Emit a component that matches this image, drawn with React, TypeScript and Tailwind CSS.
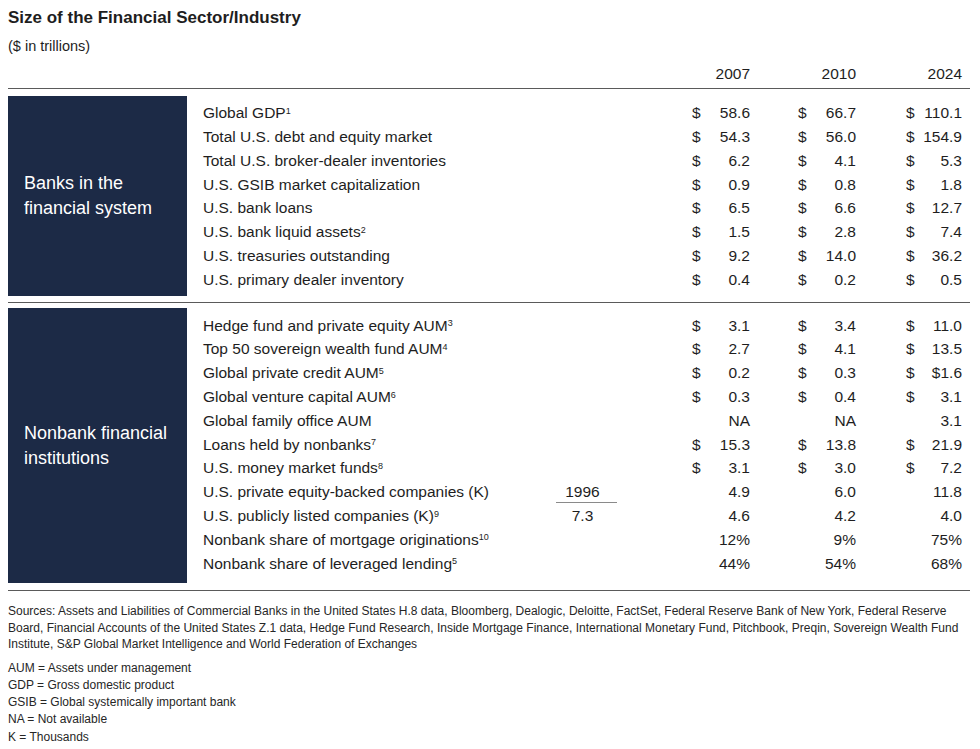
import React from 'react';

type Row = {
  label: string;
  sup?: string;
  extra?: string;
  extraLine?: boolean;
  values: [string, string, string];
  dollar?: boolean;
};

const banks: Row[] = [
  { label: 'Global GDP', sup: '1', values: ['58.6', '66.7', '110.1'], dollar: true },
  { label: 'Total U.S. debt and equity market', values: ['54.3', '56.0', '154.9'], dollar: true },
  { label: 'Total U.S. broker-dealer inventories', values: ['6.2', '4.1', '5.3'], dollar: true },
  { label: 'U.S. GSIB market capitalization', values: ['0.9', '0.8', '1.8'], dollar: true },
  { label: 'U.S. bank loans', values: ['6.5', '6.6', '12.7'], dollar: true },
  { label: 'U.S. bank liquid assets', sup: '2', values: ['1.5', '2.8', '7.4'], dollar: true },
  { label: 'U.S. treasuries outstanding', values: ['9.2', '14.0', '36.2'], dollar: true },
  { label: 'U.S. primary dealer inventory', values: ['0.4', '0.2', '0.5'], dollar: true },
];

const nonbanks: Row[] = [
  { label: 'Hedge fund and private equity AUM', sup: '3', values: ['3.1', '3.4', '11.0'], dollar: true },
  { label: 'Top 50 sovereign wealth fund AUM', sup: '4', values: ['2.7', '4.1', '13.5'], dollar: true },
  { label: 'Global private credit AUM', sup: '5', values: ['0.2', '0.3', '$1.6'], dollar: true },
  { label: 'Global venture capital AUM', sup: '6', values: ['0.3', '0.4', '3.1'], dollar: true },
  { label: 'Global family office AUM', values: ['NA', 'NA', '3.1'] },
  { label: 'Loans held by nonbanks', sup: '7', values: ['15.3', '13.8', '21.9'], dollar: true },
  { label: 'U.S. money market funds', sup: '8', values: ['3.1', '3.0', '7.2'], dollar: true },
  { label: 'U.S. private equity-backed companies (K)', extra: '1996', extraLine: true, values: ['4.9', '6.0', '11.8'] },
  { label: 'U.S. publicly listed companies (K)', sup: '9', extra: '7.3', values: ['4.6', '4.2', '4.0'] },
  { label: 'Nonbank share of mortgage originations', sup: '10', values: ['12%', '9%', '75%'] },
  { label: 'Nonbank share of leveraged lending', sup: '5', values: ['44%', '54%', '68%'] },
];

function Value({ v, dollar, last }: { v: string; dollar?: boolean; last?: boolean }) {
  // the "$ $1.6" cell keeps its own leading dollar sign
  const showDollar = dollar && v !== 'NA';
  return (
    <div className="w-[106px] flex justify-end">
      <div className={`flex justify-between ${last ? 'w-[56px]' : 'w-[58px]'}`}>
        <span>{showDollar ? '$' : ''}</span>
        <span>{v}</span>
      </div>
    </div>
  );
}

function TableRow({ row }: { row: Row }) {
  return (
    <div className="flex items-center h-[23.8px]">
      <div className="flex-1 whitespace-nowrap">
        {row.label}
        {row.sup && <sup className="text-[9px]">{row.sup}</sup>}
      </div>
      <div className="w-[61px] mr-[27px] h-full flex items-center justify-center pr-[8px]">
        {row.extra && (
          <span className={row.extraLine ? '' : ''}>{row.extra}</span>
        )}
      </div>
      {row.values.map((v, i) => (
        <Value key={i} v={v} dollar={row.dollar} last={i === 2} />
      ))}
    </div>
  );
}

function Section({ title, rows, bottomPad }: { title: React.ReactNode; rows: Row[]; bottomPad: string }) {
  return (
    <div className="flex">
      <div className="w-[179px] bg-[#1c2a46] flex items-center pl-[16px] text-white text-[18px] leading-[25px]">
        <div>{title}</div>
      </div>
      <div className={`flex-1 ml-[16px] pt-[5px] ${bottomPad}`}>
        {rows.map((r, i) => (
          <div key={i} className="relative">
            <TableRow row={r} />
            {r.extraLine && (
              <div className="absolute left-[353px] bottom-[1px] w-[61px] h-px bg-[#8a8a8a]" />
            )}
          </div>
        ))}
      </div>
    </div>
  );
}

export default function App() {
  return (
    <div
      className="w-[980px] h-[749px] bg-white text-[#1e1e1e] pl-[8px] pr-[10px]"
      style={{ fontFamily: '"Liberation Sans", Arial, sans-serif' }}
    >
      <h1 className="pt-[7px] text-[17px] leading-[22px] font-bold">Size of the Financial Sector/Industry</h1>
      <p className="mt-[7px] text-[14.5px] leading-[20px]">($ in trillions)</p>

      <div className="text-[15.5px]">
        <div className="flex mt-[7px] h-[22px] items-center pr-[8px]">
          <div className="flex-1" />
          <div className="w-[106px] text-right">2007</div>
          <div className="w-[106px] text-right">2010</div>
          <div className="w-[106px] text-right">2024</div>
        </div>
        <div className="mt-[3px] h-px bg-[#5a5a5a]" />

        <div className="mt-[7px] pr-[8px]">
          <Section
            title={<>Banks in the<br />financial system</>}
            rows={banks}
            bottomPad="pb-[5px]"
          />
        </div>
        <div className="mt-[6px] h-px bg-[#5a5a5a]" />
        <div className="mt-[5px] pr-[8px]">
          <Section
            title={<>Nonbank financial<br />institutions</>}
            rows={nonbanks}
            bottomPad="pb-[8px]"
          />
        </div>
        <div className="mt-[7px] h-px bg-[#5a5a5a]" />
      </div>

      <div className="text-[12px] text-[#262626]">
        <p className="mt-[12px] leading-[16.5px] pr-[8px]">
          Sources: Assets and Liabilities of Commercial Banks in the United States H.8 data, Bloomberg, Dealogic, Deloitte, FactSet, Federal Reserve Bank of New York, Federal Reserve Board, Financial Accounts of the United States Z.1 data, Hedge Fund Research, Inside Mortgage Finance, International Monetary Fund, Pitchbook, Preqin, Sovereign Wealth Fund Institute, S&amp;P Global Market Intelligence and World Federation of Exchanges
        </p>
        <div className="mt-[7px] leading-[17.25px]">
          <p>AUM = Assets under management</p>
          <p>GDP = Gross domestic product</p>
          <p>GSIB = Global systemically important bank</p>
          <p>NA = Not available</p>
          <p>K = Thousands</p>
        </div>
      </div>
    </div>
  );
}
